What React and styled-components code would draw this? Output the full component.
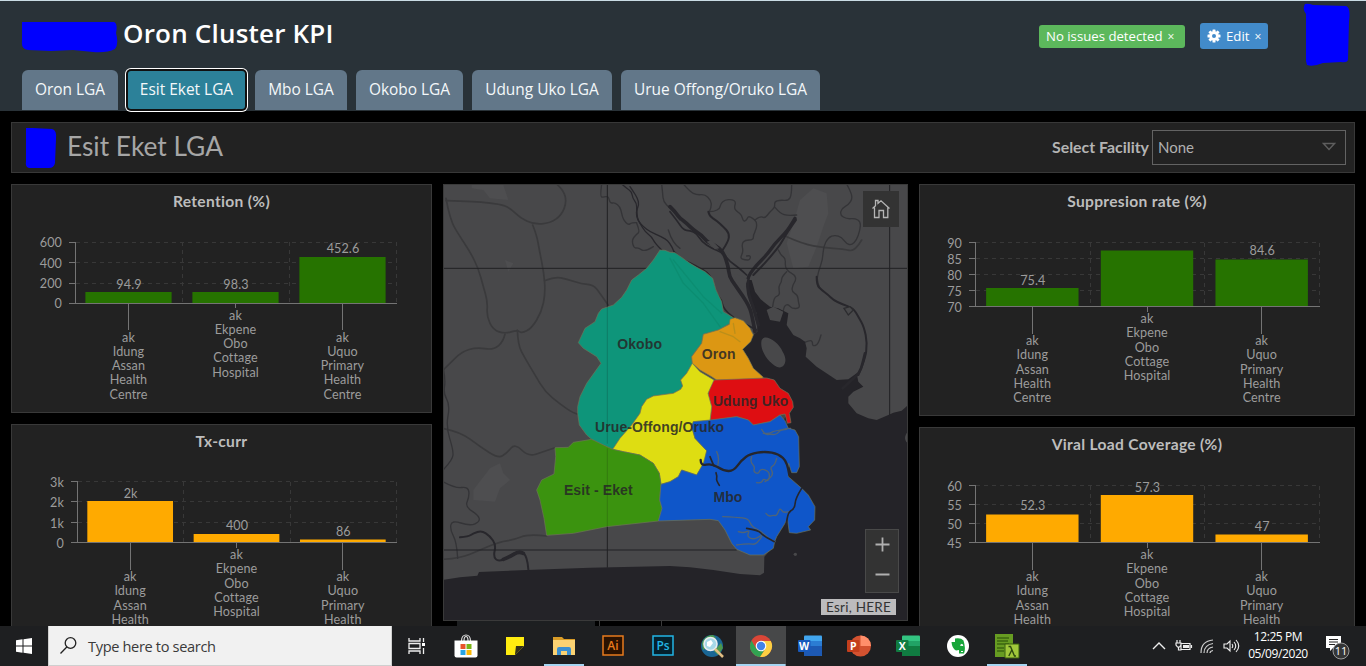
import React from 'react';
import styled, { createGlobalStyle } from 'styled-components';

const Global = createGlobalStyle`
  * { box-sizing: border-box; }
  body { margin: 0; background: #000; overflow: hidden; }
`;

const Page = styled.div`
  width: 1366px;
  height: 666px;
  display: flex;
  flex-direction: column;
  overflow: hidden;
  background: #000;
  font-family: Lato, sans-serif;
`;

const Header = styled.header`
  height: 111px;
  flex: none;
  display: flex;
  flex-direction: column;
  justify-content: space-between;
  background: #293238;
  border-top: 1px solid #c9dce4;
  font-family: 'Open Sans', sans-serif;
`;
const TitleRow = styled.div`
  display: flex;
  align-items: flex-start;
  padding-left: 21px;
  height: 66px;
`;
const Redaction = styled.svg`
  display: block;
  flex: none;
  fill: #0000fe;
`;
const TitleMark = styled(Redaction)`margin-top: 20px;`;
const PhotoMark = styled(Redaction)`margin: 2px 0 0 35px;`;
const Title = styled.h1`
  margin: 14px 0 0 5px;
  width: 916px;
  flex: none;
  font-size: 26px;
  line-height: 36px;
  font-weight: 600;
  letter-spacing: 0.2px;
  color: #fff;
  white-space: nowrap;
`;
const Badge = styled.button`
  display: flex;
  align-items: center;
  flex: none;
  border: 0;
  padding: 0 0 1px 7px;
  gap: 5px;
  border-radius: 3px;
  font: 500 13.2px 'Open Sans', sans-serif;
  color: #fff;
  white-space: nowrap;
  width: ${(p) => p.$width}px;
  height: ${(p) => p.$height}px;
  margin: ${(p) => p.$margin};
  background: ${(p) => p.$color};
`;
const Close = styled.span`
  font-size: 12px;
  padding-top: 1px;
`;
const Tabs = styled.nav`
  display: flex;
  gap: 9px;
  padding-left: 22px;
  height: 41px;
`;
const Tab = styled.button`
  width: ${(p) => p.$width}px;
  height: ${(p) => (p.$active ? 38 : 40)}px;
  margin: ${(p) => (p.$active ? '1px 0 0 -3px' : 0)};
  flex: none;
  border: 0;
  padding: 0 0 3px;
  border-radius: ${(p) => (p.$active ? '3px' : '6px 6px 0 0')};
  background: ${(p) => (p.$active ? '#2c8199' : '#627789')};
  box-shadow: ${(p) => (p.$active ? '0 0 0 2px #101010, 0 0 0 3px #fff' : 'none')};
  color: #f4f8fa;
  font: 500 15.45px 'Open Sans', sans-serif;
  white-space: nowrap;
  &:nth-child(2) { margin-left: 1px; margin-right: 1px; }
`;

const Dashboard = styled.main`
  flex: 1;
  min-height: 0;
  overflow: hidden;
  padding: 11px 11px 0;
  display: flex;
  flex-direction: column;
  gap: 11px;
`;
const FilterBar = styled.section`
  height: 51px;
  flex: none;
  display: flex;
  align-items: center;
  background: #222;
  border: 1px solid #383838;
  padding: 0 8px 0 13px;
`;
const PlaceName = styled.h2`
  margin: 0 auto 3px 10px;
  font-weight: 400;
  font-size: 26.3px;
  color: #a6a6a6;
`;
const FilterLabel = styled.label`
  font-weight: 700;
  font-size: 15.9px;
  color: #b4b4b4;
  margin: 0 3px 2px 0;
`;
const Select = styled.div`
  width: 194px;
  height: 35px;
  border: 1px solid #636363;
  display: flex;
  align-items: center;
  justify-content: space-between;
  padding: 0 9px 2px 5px;
  font-size: 15px;
  color: #b0b0b0;
`;
const Columns = styled.div`
  display: flex;
  gap: 11px;
  align-items: flex-start;
`;
const Column = styled.div`
  width: ${(p) => p.$width}px;
  flex: none;
  display: flex;
  flex-direction: column;
  gap: 11px;
`;
const Panel = styled.section`
  height: ${(p) => p.$height}px;
  border: 1px solid #393939;
  background: #222;
  flex: none;
  display: flex;
  flex-direction: column;
`;
const PanelTitle = styled.h3`
  margin: 0;
  height: 36px;
  line-height: 33px;
  text-align: center;
  font-size: 15.6px;
  font-weight: 700;
  letter-spacing: 0.3px;
  color: #bdbdbd;
`;
const ChartSvg = styled.svg`
  display: block;
  width: 100%;
  flex: 1;
  overflow: hidden;
  font-family: Lato, sans-serif;
  font-size: 12.6px;
  letter-spacing: 0.1px;
  fill: #9c9c9c;
`;

const NAMES = [
  ['ak', 'Idung', 'Assan', 'Health', 'Centre'],
  ['ak', 'Ekpene', 'Obo', 'Cottage', 'Hospital'],
  ['ak', 'Uquo', 'Primary', 'Health', 'Centre'],
];

function BarChart({ left, right, ticks, bars, color, short, drop = 38 }) {
  const top = ticks[0][1];
  const bottom = ticks[ticks.length - 1][1];
  const band = (right - left) / 3;
  const barW = band * 0.806;
  const mid = (i) => left + band * (i + 0.5) - 0.5;
  return (
    <ChartSvg>
      <g stroke="#383838" strokeDasharray="4 4" shapeRendering="crispEdges">
        {ticks.slice(0, -1).map(([l, y]) => <line key={l} x1={left} x2={right} y1={y} y2={y} />)}
        {[1, 2, 3].map((i) => <line key={i} x1={left + band * i} x2={left + band * i} y1={top} y2={bottom} />)}
      </g>
      {bars.map(([, y], i) => (
        <rect key={i} x={mid(i) - barW / 2} y={y} width={barW} height={bottom - y} fill={color} />
      ))}
      <g stroke="#747474" shapeRendering="crispEdges">
        <line x1={left} x2={left} y1={top} y2={bottom} />
        <line x1={left - 7} x2={right} y1={bottom} y2={bottom} />
        {ticks.map(([l, y]) => <line key={l} x1={left - 7} x2={left} y1={y} y2={y} />)}
        {[0, 1, 2].map((i) => (
          <line key={i} x1={mid(i)} x2={mid(i)} y1={bottom} y2={bottom + (i === 1 ? 5 : 27)} />
        ))}
      </g>
      {ticks.map(([l, y]) => <text key={l} x={left - 13.5} y={y + 5} textAnchor="end">{l}</text>)}
      {bars.map(([value, , vy], i) => (
        <text key={i} x={mid(i) + 0.5} y={vy} textAnchor="middle">{value}</text>
      ))}
      {NAMES.map((words, i) => words.slice(0, short && i !== 1 ? 4 : 5).map((w, j) => (
        <text key={w} x={mid(i)} y={bottom + 0.5 + (i === 1 ? drop - 22 : drop) + j * 14.25} textAnchor="middle">{w}</text>
      )))}
    </ChartSvg>
  );
}

const MapFrame = styled.section`
  height: 437px;
  border: 1px solid #3a3a3a;
  flex: none;
  display: grid;
  > * { grid-area: 1 / 1; }
`;
const MapSvg = styled.svg`display: block; width: 463px; height: 435px;`;
const MapControls = styled.div`
  z-index: 1;
  display: flex;
  flex-direction: column;
  align-items: flex-end;
  padding: 6px 8px 5px 0;
`;
const HomeButton = styled.button`
  width: 36px;
  height: 36px;
  border: 0;
  padding: 0;
  background: #333;
  display: grid;
  place-items: center;
`;
const Zoom = styled.div`
  margin-top: auto;
  width: 34px;
  height: 64px;
  background: #333;
  border: 1px solid #494949;
`;
const Attribution = styled.div`
  margin: 6px 3px 0 0;
  width: 75px;
  height: 16px;
  background: #bcbbbd;
  color: #333;
  font: 13.5px/16px Lato, sans-serif;
  letter-spacing: 0.25px;
  text-align: center;
`;
const UnderMap = styled.div`
  height: 5px;
  display: flex;
  margin: -11px 0 0 14px;
  > span:nth-child(1) { width: 138px; background: #1d1f21; }
  > span:nth-child(2) { width: 5px; border-right: 1px solid #3a3a3a; }
  > span:nth-child(3) { width: 62px; border-right: 1px solid #3a3a3a; }
`;

/* Rounds the corners of an open line by running quadratic curves through its midpoints. */
const curve = (text) => {
  const p = text.trim().split(/\s+/).map((s) => s.split(',').map(Number));
  let d = `M${p[0]}`;
  for (let i = 1; i < p.length - 1; i++) {
    const m = i === p.length - 2 ? p[i + 1] : [(p[i][0] + p[i + 1][0]) / 2, (p[i][1] + p[i + 1][1]) / 2];
    d += `Q${p[i]} ${m}`;
  }
  return d;
};

const SEA = '925,300 935,300 945,335 962,358 990,380 1015,385 1045,400 1040,435 1060,465 1080,475 1095,485 1100,505 1097,530 1130,560 1190,600 1225,598 1250,580 1255,605 1270,620 1240,635 1225,650 1225,670 1250,700 1285,715 1310,720 1345,705 1360,698 1385,692 1404,675 1404,1323 9,1323 9,1200 60,1192 112,1187 117,1176 260,1170 450,1163 690,1158 750,1162 820,1170 900,1182 960,1186 972,1178 973,1130 1000,1100 990,1000 1000,800 1040,700 1000,620 1003,600 970,592 940,565 925,535 908,508 930,485 940,465 952,455 950,400 925,350';
const ROADS = [
  '18,62 110,65 180,72 210,84 240,113 280,133 330,130 365,105 380,65 370,30 350,12',
  '18,55 30,120 60,170 90,215 115,265 130,320 143,365 140,410 160,450 195,461 232,450 245,460 275,445 305,395 316,340 312,280 298,210 290,165 278,135',
  '314,302 345,290 380,297 425,312 460,314 480,340 505,376',
  '195,462 190,485 160,510 110,502 65,515 25,555 9,570',
  '232,450 234,495 255,535 285,585 315,635 360,672 400,700 415,703',
  '9,745 60,755 120,800 175,835 200,820 225,790 265,830 310,815 345,803',
  '9,1138 60,1135 120,1110 180,1085 220,1080 265,1062 320,1068',
  '1040,170 1090,192 1150,203 1210,207 1245,215 1265,180',
];
const RIVERS = [
  '9,560 17,600 10,640 30,675 18,740 40,810 38,840 9,870',
  '9,905 45,925 85,920 88,950 75,980 115,1005 120,1025 90,1038 35,1020 30,1050 50,1085 53,1135',
  '485,12 480,50 490,52 505,48 510,70 525,68 540,80 545,100 550,120 565,135 575,128 590,128',
  '590,130 600,155 590,162 575,180 582,205 595,203 615,216 640,200',
  '665,12 668,40 670,65 690,85 700,90 710,110 720,120',
  '685,150 697,190 720,205',
  '730,12 750,35 770,45 795,43 812,60 815,80 808,95',
  '810,95 822,95 840,85 842,70 855,60 875,58 888,65 882,85 892,95 905,105 910,125 920,120 925,108 938,115 950,125 950,145 940,165 940,180 915,180 905,192 910,215 900,235 915,240 930,240 932,225 920,228',
  '945,120 960,108 975,115 990,95 1005,82 1003,65 1020,60 1045,62 1055,45 1055,12',
  '1005,82 1020,100 1045,108 1070,105',
  '1015,210 1022,225 1037,235 1035,260 1045,275 1065,285 1068,300 1058,315 1055,335 1073,345 1075,365 1080,385 1055,386 1045,372 1032,378 1030,392',
  '1040,275 1025,290 1025,305 1015,320 1020,345 1005,350 1000,365 998,380',
  '1220,12 1230,30 1238,55 1225,75 1205,85 1200,105 1220,117 1245,115 1262,125 1260,150 1250,180 1235,195 1220,192 1205,172 1185,165 1165,172 1150,200 1148,240 1135,275 1130,305 1140,325',
  '1094,487 1110,480 1118,485 1117,498 1135,495 1143,465',
];
const DEEP = [
  ['805,95 808,108 830,122 850,140 868,160 865,185 848,210', 6],
  ['545,12 560,25 575,35 578,55 590,70 590,90 592,115 600,130 615,155 635,170 645,190 665,210', 4],
  ['570,20 580,35 593,55 597,75 588,95 592,120 610,140 630,155 660,168 690,185 702,215', 4],
  ['690,80 705,95 720,115 740,130 760,150 785,165 800,185 825,195 850,215 865,260 868,290 885,315 910,350 925,375 935,400 945,455', 11],
  ['690,95 710,120 730,150 750,152 770,160 785,185 815,205 848,218 870,245 895,262 920,285', 5],
  ['1065,115 1050,140 1035,160 1005,190 980,225 950,255 930,280 922,300 925,345 940,380 955,435', 10],
  ['1068,120 1040,160 1020,195 1000,220 970,255 940,285', 6],
  ['702,215 720,235 750,248 780,265 800,275 818,300 825,335 845,360 850,385 880,413 920,435 950,450', 5],
  ['1130,290 1130,315 1145,330 1165,345 1180,360 1205,372 1240,385 1255,410 1272,440 1282,490 1275,540 1255,585', 6],
  ['1275,520 1268,550 1258,580 1230,605 1208,625', 8],
  ['60,1072 85,1070 100,1060 125,1052 150,1068 168,1095 160,1130 175,1145 205,1132 240,1110 262,1130 265,1168', 6],
  ['190,1138 210,1130 237,1113 250,1120', 11],
];
const LGAS = [
  ['#0e957a', '660,210 675,211 690,217 705,218 750,250 770,262 795,275 818,295 828,330 845,365 850,395 880,413 870,430 835,450 790,463 785,490 765,515 755,530 757,550 740,580 722,600 728,618 722,628 700,640 640,648 620,658 605,680 600,700 575,735 540,775 518,808 490,795 455,778 440,765 418,735 413,700 413,680 420,650 440,610 483,550 470,530 430,505 415,488 435,445 465,425 475,400 485,387 520,375 545,352 560,330 575,300 595,285 620,265 640,240'],
  ['#dc9713', '790,463 835,450 868,433 870,418 885,413 910,422 930,445 940,465 932,485 908,508 925,535 940,565 970,592 960,600 830,600 815,590 780,570 757,550 755,530 785,490'],
  ['#de0e12', '822,600 980,594 1003,600 1020,625 1045,640 1058,665 1060,682 1048,700 1053,728 1042,730 1035,702 1020,705 990,725 940,735 925,720 890,710 810,722 815,680 804,645 810,615'],
  ['#dedd12', '757,550 780,575 822,600 804,640 815,680 810,722 760,725 755,740 765,775 800,812 795,845 770,885 725,870 715,890 690,905 663,913 658,880 640,850 600,825 550,815 518,808 540,775 575,735 600,700 605,680 620,658 640,648 700,640 722,628 728,618 722,600 740,580'],
  ['#3b930f', '345,803 385,802 400,787 455,778 490,795 518,808 550,815 600,825 640,850 658,880 663,913 659,960 666,985 655,1023 500,1040 400,1060 320,1066 312,1015 300,960 290,930 305,900 342,882 347,830'],
  ['#0f56c9', '663,913 690,905 715,890 725,870 770,885 790,850 800,812 765,775 755,740 760,725 810,720 890,710 925,720 940,735 990,725 1020,705 1035,722 1045,745 1065,750 1076,770 1078,860 1070,878 1055,878 1046,850 1045,890 1085,925 1105,945 1125,980 1124,1020 1105,1040 1112,1050 1070,1060 1048,1058 1042,1015 1035,1030 1010,1070 1004,1085 1000,1105 970,1125 930,1125 890,1108 875,1090 855,1050 835,1022 810,1018 655,1023 666,985 659,960'],
];
const CREEKS = [
  '965,748 975,765 990,762 1010,765 1025,745 1052,745', '970,760 990,762 1000,752 1040,748',
  '935,830 930,845 945,860 940,875 955,882 960,868 975,868 990,880 985,905 970,895 965,910 950,908', '1010,835 1005,855 990,862 1000,880 990,895 975,905',
  '978,1000 985,1010 1000,1005 1010,1008 1020,982 1030,1000 1045,995', '895,1055 910,1060 930,1050 920,1070 945,1080 965,1065',
  '848,1010 890,1012 925,1015 935,1040 965,1055 990,1080 1005,1085', '890,1095 925,1090 950,1095 965,1070', '830,815 840,835 832,860',
];
const MAP_LABELS = [
  ['Okobo', 599, 506], ['Oron', 836, 536], ['Udung Uko', 932, 677], ['Urue-Offong/Oruko', 659, 755], ['Esit - Eket', 475, 944], ['Mbo', 864, 965],
];

function RegionMap() {
  return (
    <MapSvg viewBox="12 15 1389 1305" preserveAspectRatio="none">
      <rect x="0" y="0" width="1410" height="1330" fill="#48484a" />
      <g fill="#4e4e50">
        <path d="M95,15L190,15 205,60 150,55 130,30 95,25Z M195,240L220,250 205,275Z" />
        <path d="M1080,60L1120,25 1160,40 1165,100 1150,140 1130,200 1105,260 1060,265 1040,190 1060,130Z" />
        <path d="M100,930L150,865 180,850 190,880 210,900 180,925 165,965 100,960Z" />
      </g>
      <g fill="none" strokeLinecap="round" strokeLinejoin="round">
        <g stroke="#3a3a3c" strokeWidth="5">{ROADS.map((p) => <path key={p} d={curve(p)} />)}</g>
        <g stroke="#343437" strokeWidth="4">{RIVERS.map((p) => <path key={p} d={curve(p)} />)}</g>
        <polygon points={SEA} fill="#242328" />
        {DEEP.map(([p, w]) => <path key={p} d={curve(p)} stroke="#28272c" strokeWidth={w} />)}
      </g>
      <g fill="#48484a">
        <path d="M965,480C975,460 1015,485 1028,515C1047,545 1030,570 1010,560C980,545 958,505 965,480Z" />
        <path d="M980,390L1000,380 1030,395 1020,425 990,420Z" />
        <path d="M882,285L890,282 922,298 912,330 895,310Z" />
        <path d="M800,185L815,180 838,205 825,208Z" />
        <path d="M1212,385L1230,380 1240,390 1225,405Z" stroke="#2c2c2f" strokeWidth="4" />
        <circle cx="1066" cy="1123" r="5" />
        <path d="M1404,755C1390,770 1395,785 1404,790Z" />
      </g>
      <g fill="none" stroke="#212124" strokeWidth="3">
        <path d="M12,265H1401 M12,1110H690L890,1110 M502,15V1163 M1349,15V705" />
      </g>
      {LGAS.map(([color, points]) => (
        <polygon key={color} points={points} fill={color} stroke="#6f7458" strokeOpacity=".65" strokeWidth="3" strokeLinejoin="round" />
      ))}
      <g fill="none" strokeLinecap="round" strokeLinejoin="round">
        <path d="M502,380V790 M502,806V1040" stroke="#111" strokeOpacity=".18" strokeWidth="3" />
        <path d="M690,235L730,310 790,370 840,440 M700,240L790,350 845,400 M840,455L880,470 900,485 M880,430L885,460" stroke="#064" strokeOpacity=".15" strokeWidth="4" />
        {CREEKS.map((p) => <path key={p} d={curve(p)} stroke="#4f6478" strokeWidth="4" />)}
        <g stroke="#25262d">
          <path d={curve('782,840 782,858 815,850 850,872 880,874 905,840 930,822 975,814 1015,822 1042,845 1048,885')} strokeWidth="7" />
          <path d={curve('810,830 818,850 822,858')} strokeWidth="5" />
          <path d={curve('828,878 832,890 828,900 838,916')} strokeWidth="5" />
          <path d={curve('1085,925 1066,955 1065,985 1040,1000 1038,1050')} strokeWidth="5" />
          <path d={curve('920,1045 955,1050 970,1068 1003,1085')} strokeWidth="5" />
        </g>
      </g>
      <g fill="#262626" fillOpacity=".85" fontFamily="'Liberation Sans', sans-serif" fontWeight="700" fontSize="42" letterSpacing="0.3" textAnchor="middle">
        {MAP_LABELS.map(([t, x, y]) => <text key={t} x={x} y={y}>{t}</text>)}
      </g>
    </MapSvg>
  );
}

const Taskbar = styled.footer`
  height: 40px;
  flex: none;
  display: flex;
  align-items: stretch;
  background: #1e1f21;
  font-family: 'Noto Sans', sans-serif;
`;
const Start = styled.div`
  width: 48px;
  display: grid;
  place-items: center;
`;
const Search = styled.div`
  width: 344px;
  display: flex;
  align-items: center;
  gap: 11px;
  padding-left: 11px;
  background: #f1f1f1;
  border: 1px solid #cfcfcf;
  border-top: 0;
  color: #3a3a3a;
  font: 14.6px 'Open Sans', sans-serif;
  letter-spacing: -0.35px;
`;
const TaskButton = styled.div`
  width: 49.2px;
  flex: none;
  display: grid;
  place-items: center;
  background: ${(p) => (p.$active ? '#474849' : 'transparent')};
  background-image: ${(p) => (p.$line ? 'linear-gradient(#a5d5f2, #a5d5f2)' : 'none')};
  background-size: ${(p) => p.$line || 0}px 2px;
  background-position: bottom center;
  background-repeat: no-repeat;
`;
const Tray = styled.div`
  margin-left: auto;
  display: flex;
  align-items: center;
  width: 214px;
`;
const TrayIcon = styled.svg`
  flex: none;
  margin-right: ${(p) => p.$gap || 0}px;
`;
const Clock = styled.div`
  width: 62px;
  margin: 0 16px 0 7px;
  display: flex;
  flex-direction: column;
  align-items: center;
  color: #fff;
  font: 12px/17.5px 'Open Sans', sans-serif;
  letter-spacing: -0.4px;
  white-space: nowrap;
  padding-bottom: 2px;
`;

const Glyph = ({ children, ...rest }) => <svg width="26" height="26" viewBox="0 0 26 26" {...rest}>{children}</svg>;

const TaskView = () => (
  <Glyph fill="none" stroke="#eee" strokeWidth="1.3">
    <path d="M5,5v3h11v-3 M5,21v-3h11v3 M5,10.500h11v5h-11z M19.500,5v4 M19.500,15v6" /><path d="M18,10h3v3h-3z" fill="#fff" stroke="none" />
  </Glyph>
);
const Store = () => (
  <Glyph>
    <path d="M8.5,8C8.5,0 17.5,0 17.5,8 M11,8C11,2 15,2 15,8" fill="none" stroke="#ddd" strokeWidth="1.2" />
    <path d="M1.5,7.5h23v15q0,2 -2,2h-19q-2,0 -2,-2z" fill="#fff" />
    <path d="M7.5,11h5v5h-5z" fill="#e9532b" /><path d="M13.5,11h5v5h-5z" fill="#7ab317" /><path d="M7.5,17h5v5h-5z" fill="#29a4e4" /><path d="M13.5,17h5v5h-5z" fill="#fbb806" />
  </Glyph>
);
const Notes = () => <Glyph><path d="M4,4h18v18h-18z" fill="#ffec10" /><path d="M13,22v-1l1,-8h8z" fill="#32301a" /><path d="M13,22l9,-9v9z" fill="#1f1f1f" /></Glyph>;
const Folder = () => (
  <Glyph>
    <path d="M2,4h9l2,2h11v15h-22z" fill="#d99c27" /><path d="M2,7h22v15h-22z" fill="#fbd272" />
    <path d="M6,22v-6q0,-2 2,-2h10q2,0 2,2v6h-4v-4h-6v4z" fill="#3b8fd0" />
  </Glyph>
);
const Adobe = ({ label, color, bg }) => (
  <Glyph>
    <rect x="3" y="3" width="20" height="19" fill={bg} stroke={color} strokeWidth="1.5" />
    <text x="13" y="17" textAnchor="middle" fontSize="12" fontWeight="600" fontFamily="'Open Sans', sans-serif" fill={color}>{label}</text>
  </Glyph>
);
const Globe = () => (
  <Glyph>
    <circle cx="13" cy="13" r="11" fill="#1a6694" /><path d="M3,10Q6,2 14,2L17,5 9,8 7,15 4,17Z M15,18L22,10 24,15 19,22Z" fill="#4b984d" />
    <circle cx="11.5" cy="11" r="6.5" fill="#a6d8e8" stroke="#e9edf0" strokeWidth="1.6" /><path d="M8,9l4,-2 2,3 -3,4 -3,-1z" fill="#fff" />
    <path d="M16,16l8,8" stroke="#e1bd83" strokeWidth="2.5" />
  </Glyph>
);
const Chrome = () => (
  <Glyph>
    <circle cx="13" cy="13" r="11" fill="#da4637" />
    <path d="M3.5,7.5L8.2,15.7 13,18 17.5,15.8 12,24A11,11 0 0 1 3.5,7.5Z" fill="#31a352" />
    <path d="M13,8H22.8A11,11 0 0 1 12,24L17.4,15.8Z" fill="#fdcf43" />
    <circle cx="13" cy="13" r="5.3" fill="#fff" /><circle cx="13" cy="13" r="4.2" fill="#4382e8" />
  </Glyph>
);
const Office = ({ letter, colors, round }) => (
  <Glyph>
    {round ? (
      <><circle cx="14.5" cy="13" r="10.5" fill={colors[0]} /><path d="M14.5,2.5A10.5,10.5 0 0 1 25,13H14.5Z" fill={colors[1]} /></>
    ) : (
      <>
        <rect x="7" y="2.5" width="18" height="20.5" rx="1" fill={colors[0]} />
        <path d="M7,8h18v5h-18z" fill={colors[1]} /><path d="M7,13h18v9q0,1 -1,1h-17z" fill={colors[2]} />
      </>
    )}
    <rect x="1" y="7" width="12.5" height="12" rx="1" fill={colors[3]} />
    <text x="7.2" y="16.8" textAnchor="middle" fontSize="10.5" fontWeight="700" fontFamily="'Open Sans', sans-serif" fill="#fff">{letter}</text>
  </Glyph>
);
const Evernote = () => (
  <Glyph>
    <circle cx="13" cy="13" r="11" fill="#fff" />
    <path d="M6.5,9L10,5.5q6,-1 8.5,2q2.5,8 .5,13h-5v-3.500l-3,.5q-4,-2 -4.500,-8.500h3.500v-3.500" fill="#18a53a" />
    <path d="M15.5,12.2q1.500,-1.800 2.600,.3z M16,18.500h2" fill="#fff" stroke="#fff" />
  </Glyph>
);
const Lambda = () => (
  <Glyph>
    <path d="M1,1h18v23h-18z" fill="#679c22" /><path d="M3,5h12 M3,8h11 M3,11h12 M3,15h7 M3,18h7" stroke="#3c6611" strokeWidth="1.3" />
    <path d="M11,11h14v14h-14z" fill="#a0c83b" stroke="#385f10" />
    <path d="M14.5,13.500h2l4,9.500h1.500 M17.800,17l-3,6" fill="none" stroke="#2e4a10" strokeWidth="1.4" />
  </Glyph>
);

const Gear = () => (
  <svg width="14" height="14" viewBox="-7 -7 14 14" fill="#fff">
    {[0, 45, 90, 135].map((a) => <rect key={a} x="-1.5" y="-6.500" width="3" height="13" rx=".5" transform={`rotate(${a})`} />)}
    <circle r="4.700" /><circle r="2" fill="#428bca" />
  </svg>
);

export default function App() {
  return (
    <Page>
      <Global />
      <Header>
        <TitleRow>
          <TitleMark width="97" height="33"><path d="M1,1H93Q97,3 95,12Q98,23 94,28Q86,32 72,31L52,29 30,30 7,29Q0,28 1,20Z" /></TitleMark>
          <Title>Oron Cluster KPI</Title>
          <Badge $width={146} $height={23} $margin="24px 0 0" $color="#5cb85c">No issues detected <Close>×</Close></Badge>
          <Badge $width={68} $height={26} $margin="22px 0 0 15px" $color="#428bca"><Gear />Edit <Close>×</Close></Badge>
          <PhotoMark width="48" height="64"><path d="M2,1Q5,0 10,2L43,3Q48,5 46,18L45,56Q45,60 38,59L20,60Q10,64 4,62L3,58 3,11Q-1,6 2,1Z" /></PhotoMark>
        </TitleRow>
        <Tabs>
          <Tab $width={96}>Oron LGA</Tab>
          <Tab $width={117} $active>Esit Eket LGA</Tab>
          <Tab $width={92}>Mbo LGA</Tab>
          <Tab $width={107}>Okobo LGA</Tab>
          <Tab $width={140}>Udung Uko LGA</Tab>
          <Tab $width={199}>Urue Offong/Oruko LGA</Tab>
        </Tabs>
      </Header>
      <Dashboard>
        <FilterBar>
          <Redaction width="32" height="42"><path d="M1,1H8L27,2Q32,3 31,12L30,36Q29,41 24,41L4,41Q0,40 1,34L1,18Z" /></Redaction>
          <PlaceName>Esit Eket LGA</PlaceName>
          <FilterLabel>Select Facility</FilterLabel>
          <Select>None<svg width="14" height="9"><path d="M1.500,1.500h11l-5.500,6z" fill="none" stroke="#5e5e5e" strokeWidth="1.400" /></svg></Select>
        </FilterBar>
        <Columns>
          <Column $width={421}>
            <Panel $height={229}>
              <PanelTitle>Retention (%)</PanelTitle>
              <BarChart left={63.5} right={384.5} color="#267300" ticks={[['600', 21], ['400', 41.5], ['200', 62], ['0', 82]]} bars={[['94.9', 71, 68], ['98.3', 71, 68], ['452.6', 36, 32]]} />
            </Panel>
            <Panel $height={260}>
              <PanelTitle>Tx-curr</PanelTitle>
              <BarChart short left={65.5} right={384.5} color="#ffaa00" ticks={[['3k', 20.500], ['2k', 40.500], ['1k', 61.500], ['0', 81.500]]} bars={[['2k', 40, 37], ['400', 73, 69], ['86', 78.500, 75]]} />
            </Panel>
          </Column>
          <Column $width={465}>
            <MapFrame>
              <RegionMap />
              <MapControls>
                <HomeButton>
                  <svg width="20" height="20" fill="none" stroke="#b5b5b5" strokeWidth="1.300"><path d="M1.500,9.500L4.500,6.700V1.500H7V4.300L10,1.800 18.500,9.500 M3.500,8.500V18.500H8V11.500H12.500V18.500H16.800V8.500" /></svg>
                </HomeButton>
                <Zoom>
                  <svg width="32" height="62" stroke="#b0b0b0" strokeWidth="1.800"><path d="M9.500,14.500h14 M16.500,7.500v14 M9.500,44.500h14" /></svg>
                </Zoom>
                <Attribution>Esri, HERE</Attribution>
              </MapControls>
            </MapFrame>
            <UnderMap><span /><span /><span /></UnderMap>
          </Column>
          <Column $width={436}>
            <Panel $height={232}>
              <PanelTitle>Suppresion rate (%)</PanelTitle>
              <BarChart left={55.5} right={399.5} color="#267300" ticks={[['90', 21.500], ['85', 37.500], ['80', 53.500], ['75', 69.500], ['70', 85.500]]} bars={[['75.4', 67, 64], ['', 29.500, 20], ['84.6', 38.500, 34]]} />
            </Panel>
            <Panel $height={260}>
              <PanelTitle>Viral Load Coverage (%)</PanelTitle>
              <BarChart short left={55.5} right={399.5} color="#ffaa00" ticks={[['60', 21.500], ['55', 40.500], ['50', 59.500], ['45', 78.500]]} bars={[['52.3', 50.500, 46], ['57.3', 31, 28], ['47', 70.500, 67]]} />
            </Panel>
          </Column>
        </Columns>
      </Dashboard>
      <Taskbar>
        <Start><svg width="16" height="16" fill="#fff"><path d="M0,2.200L6.500,1.300V7.500H0Z M7.500,1.200L16,0V7.500H7.500Z M0,8.500H6.500V14.700L0,13.800Z M7.500,8.500H16V16L7.500,14.800Z" /></svg></Start>
        <Search>
          <svg width="17" height="17" fill="none" stroke="#222" strokeWidth="1.300"><circle cx="10.500" cy="6" r="5.300" /><path d="M6.800,10L.5,16.500" /></svg>
          Type here to search
        </Search>
        <TaskButton><TaskView /></TaskButton>
        <TaskButton><Store /></TaskButton>
        <TaskButton><Notes /></TaskButton>
        <TaskButton $line={40}><Folder /></TaskButton>
        <TaskButton><Adobe label="Ai" color="#e87b1c" bg="#2b1200" /></TaskButton>
        <TaskButton><Adobe label="Ps" color="#22b5e5" bg="#04202c" /></TaskButton>
        <TaskButton><Globe /></TaskButton>
        <TaskButton $active $line={50}><Chrome /></TaskButton>
        <TaskButton><Office letter="W" colors={['#41a5ee', '#2b7cd3', '#1d59b3', '#185abd']} /></TaskButton>
        <TaskButton><Office round letter="P" colors={['#d35230', '#ff8f6b', '', '#c43e1c']} /></TaskButton>
        <TaskButton><Office letter="X" colors={['#33c481', '#21a366', '#107c41', '#107c41']} /></TaskButton>
        <TaskButton><Evernote /></TaskButton>
        <TaskButton $line={40}><Lambda /></TaskButton>
        <Tray>
          <TrayIcon width="14" height="10" $gap={9} fill="none" stroke="#eee" strokeWidth="1.400"><path d="M1,8L7,2 13,8" /></TrayIcon>
          <TrayIcon width="18" height="14" $gap={7} fill="none" stroke="#eee" strokeWidth="1.200"><path d="M6,4.500h9v6h-9z M16.500,6v3 M2,1v3 M5,1v3 M1,4h5v2l-1.500,2h-2l-1.500,-2z M3.500,8v3h3" /><path d="M8,6h6v3h-6z" fill="#eee" stroke="none" /></TrayIcon>
          <TrayIcon width="15" height="15" $gap={8} fill="none" stroke="#ccc" strokeWidth="1.200"><path d="M1,14Q1,2 13,1 M4,14Q4,6 13,4.500 M7,14Q7,9 13,8 M10,14Q10,12 13,11.500" /></TrayIcon>
          <TrayIcon width="17" height="14" fill="none" stroke="#eee" strokeWidth="1.100"><path d="M1,5h3l3,-3v10l-3,-3h-3z M9,5q1.500,2 0,4 M11,3q3.500,4 0,8 M13,1q5.500,6 0,12" /></TrayIcon>
          <Clock><span>12:25 PM</span><span>05/09/2020</span></Clock>
          <svg width="26" height="28">
            <path d="M1,4h15v12h-8l-3,3v-3h-4z" fill="#fff" /><path d="M4,7.500h9 M4,10h9 M4,12.500h6" stroke="#222" />
            <circle cx="16" cy="19" r="8" fill="#353637" stroke="#9b9b9b" />
            <text x="16" y="23" fontSize="11" textAnchor="middle" fill="#fff" fontFamily="'Open Sans', sans-serif">11</text>
          </svg>
        </Tray>
      </Taskbar>
    </Page>
  );
}
